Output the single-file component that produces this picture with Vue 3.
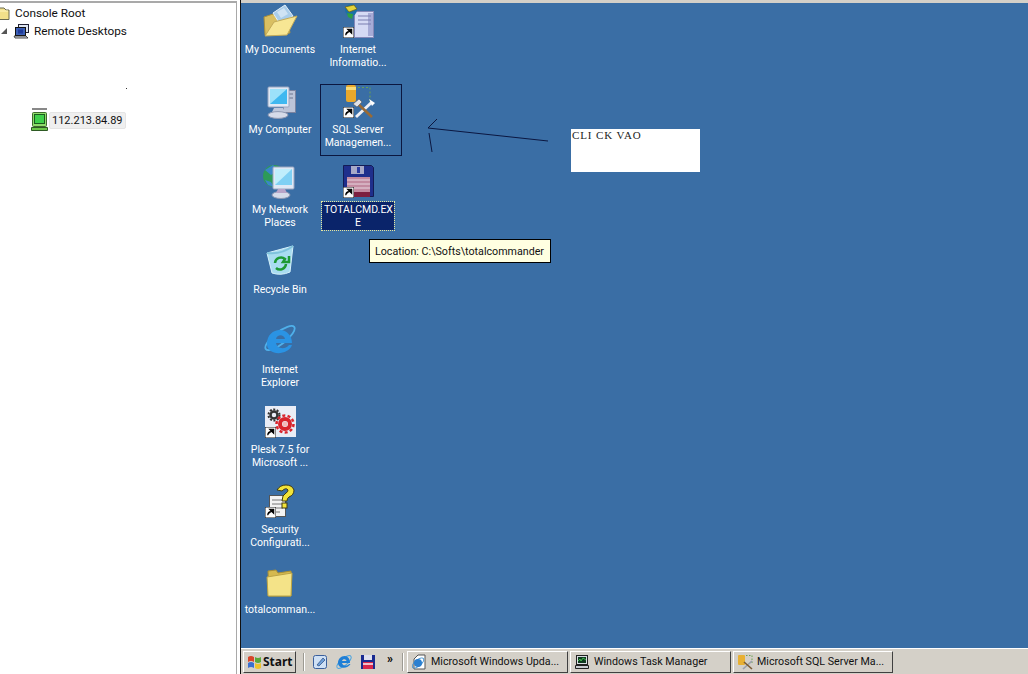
<script setup>
const icons = [
  { name: 'docs', label: ['My Documents'] },
  { name: 'iis', label: ['Internet', 'Informatio...'], shortcut: true },
  { name: 'computer', label: ['My Computer'] },
  { name: 'sql', label: ['SQL Server', 'Managemen...'], shortcut: true, boxed: true },
  { name: 'network', label: ['My Network', 'Places'] },
  { name: 'floppy', label: ['TOTALCMD.EX', 'E'], shortcut: true, selected: true },
  { name: 'bin', label: ['Recycle Bin'] },
  null,
  { name: 'ie', label: ['Internet', 'Explorer'] },
  null,
  { name: 'plesk', label: ['Plesk 7.5 for', 'Microsoft ...'], shortcut: true },
  null,
  { name: 'security', label: ['Security', 'Configurati...'], shortcut: true },
  null,
  { name: 'folder', label: ['totalcomman...'] },
  null
]

const tasks = [
  { name: 'ie', text: 'Microsoft Windows Upda...', width: 161 },
  { name: 'taskmgr', text: 'Windows Task Manager', width: 161 },
  { name: 'sql', text: 'Microsoft SQL Server Ma...', width: 160 }
]
</script>

<template>
  <div class="screen">
    <aside class="console">
      <div class="tree-row root-row">
        <svg class="tree-icon root-folder" width="16" height="14" viewBox="0 0 16 14">
          <path d="M-6 2h14l2 2h3v9.500H-6z" fill="#f2e08a" stroke="#6a6a50" />
          <path d="M-6 5H12" stroke="#fff6c0" />
        </svg>
        <span>Console Root</span>
      </div>
      <div class="tree-row desk-row">
        <span class="arrow"></span>
        <svg class="tree-icon" width="17" height="16" viewBox="0 0 17 16">
          <rect x="5.500" y="1.500" width="10" height="8" fill="#dfe6f2" stroke="#223" />
          <rect x="2.500" y="4.500" width="10" height="8" fill="#3b5fb5" stroke="#111" />
          <path d="M5 6.500h5v4H5z" fill="#1f3a9a" />
          <path d="M1 13h12l2 2H2z" fill="#d8dbe0" stroke="#222" stroke-width=".8" />
        </svg>
        <span>Remote Desktops</span>
      </div>
      <span class="speck"></span>
      <div class="server">
        <svg width="18" height="24" viewBox="0 0 18 24">
          <path d="M1 1h15" stroke="#555" stroke-width="1.400" />
          <rect x="1.500" y="4.500" width="14" height="14" rx="1" fill="#8fdc6a" stroke="#3d6a2c" />
          <rect x="3.500" y="6.500" width="10" height="9" fill="#3fd04a" stroke="#1c5a1e" />
          <path d="M.5 19.500h16v3H.5z" fill="#6cc84a" stroke="#2e5a24" />
        </svg>
        <span class="server-name">112.213.84.89</span>
      </div>
    </aside>

    <main class="remote">
      <section class="desktop">
        <div class="icon-grid">
          <template v-for="(item, i) in icons" :key="i">
            <div v-if="item" class="desk-icon">
              <div class="glyph">
                <svg width="36" height="36" viewBox="0 0 36 36">
                  <g v-if="item.name === 'docs'">
                    <path d="M3 31 2 13l9-3 2 2 12-3 3 20z" fill="#d9bf62" stroke="#a98f3c" />
                    <path d="M11 9 23 1l8 11-13 8z" fill="#a9cdea" stroke="#e4f0fa" />
                    <path d="M15 8l7-4 4 6-7 4z" fill="#cfe3f4" />
                    <path d="M3 32 12 18l23-6-10 19z" fill="#f7e694" stroke="#c4ab58" />
                  </g>
                  <g v-else-if="item.name === 'iis'">
                    <rect x="14.500" y="7.500" width="19" height="26" fill="#d5daf4" stroke="#8488b8" />
                    <path d="M28 9h5v23h-5z" fill="#a6abd6" />
                    <path d="M18 12h13M18 16h13M18 20h13" stroke="#7a7fb0" />
                    <circle cx="11" cy="6" r="6" fill="#1c6fa8" />
                    <path d="M5 3l9-2 3 4-8 3z" fill="#e4d33a" stroke="#6b5d12" stroke-width=".7" />
                    <path d="M7 9l6 1-1 5-4-2z" fill="#2ea043" />
                  </g>
                  <g v-else-if="item.name === 'computer'">
                    <rect x="21.500" y="6.500" width="12" height="22" fill="#bcc4d8" stroke="#7a83a0" />
                    <path d="M24 10h7M24 14h7" stroke="#6d7690" />
                    <rect x="6" y="3" width="21" height="20" rx="1" fill="#dfe8f5" stroke="#9aa6c0" />
                    <rect x="8" y="5" width="17" height="15" fill="#3fb8f0" />
                    <path d="M8 5h17L8 20z" fill="#b4ebfc" opacity=".8" />
                    <path d="M12 24h9l2 4H10z" fill="#bfc8dc" />
                    <ellipse cx="16" cy="31" rx="10" ry="3.400" fill="#d6dbe9" stroke="#8f99b3" />
                  </g>
                  <g v-else-if="item.name === 'network'">
                    <circle cx="12" cy="12" r="11" fill="#2d9a58" />
                    <path d="M3 6l8-5 5 5-7 5zM3 16l6 2 3 5-6-2z" fill="#3a86c8" />
                    <rect x="11" y="3" width="21" height="22" rx="1" fill="#dfe8f5" stroke="#9aa6c0" />
                    <rect x="13" y="5" width="17" height="16" fill="#7fd0f4" />
                    <path d="M13 5h17L13 21z" fill="#c0eefc" />
                    <ellipse cx="19" cy="31" rx="9" ry="3.500" fill="#d6dbe9" stroke="#8f99b3" />
                    <path d="M16 25h7l2 4H14z" fill="#b8a4c8" />
                  </g>
                  <g v-else-if="item.name === 'sql'">
                    <rect x="6" y="1" width="10" height="17" rx="2" fill="#e8a82c" />
                    <path d="M6 3h10v3H6z" fill="#f7dc7a" />
                    <path d="M18 3.500h12v15" fill="none" stroke="#6aa052" stroke-dasharray="2 2" />
                    <path d="M16 33 32 18" stroke="#f0f0f5" stroke-width="3" />
                    <path d="M17 19l15 14" stroke="#9a6a34" stroke-width="2.500" />
                    <path d="M13 20l6-5 3 3-5 5z" fill="#dfe2e8" stroke="#555" stroke-width=".6" />
                    <path d="M29 15l6 4-3 3z" fill="#fff" />
                  </g>
                  <g v-else-if="item.name === 'floppy'">
                    <path d="M3.500 1.500h28l2 2v29h-30z" fill="#1f2f8c" stroke="#131c55" />
                    <rect x="11" y="2" width="13" height="8" fill="#a7a9c8" />
                    <rect x="17" y="3" width="3" height="6" fill="#2a3aa0" />
                    <rect x="7" y="13" width="23" height="20" fill="#c28aa0" />
                    <path d="M7 16h23M7 20h23M7 24h23" stroke="#e7d5df" />
                    <rect x="7" y="28" width="23" height="5" fill="#7c1f3f" />
                  </g>
                  <g v-else-if="item.name === 'bin'">
                    <path d="M5 9 31 2l-3 26q-9 4-18 1z" fill="#a8dcf0" stroke="#d5f1fb" />
                    <path d="M5 9q14 2 26-7" fill="none" stroke="#7ec2dc" stroke-width="2" />
                    <path d="M13 19a6 6 0 0 1 10-4l-2 3h6v-6" fill="none" stroke="#1d9a34" stroke-width="2.500" />
                    <path d="M24 20a6 6 0 0 1-10 4" fill="none" stroke="#1d9a34" stroke-width="2.500" />
                  </g>
                  <g v-else-if="item.name === 'ie'">
                    <ellipse cx="18" cy="14" rx="18" ry="6" transform="rotate(-38 18 14)" fill="none" stroke="#4fb0ea" stroke-width="1.800" />
                    <path d="M5 20C5 11 11 6 18 6s12 6 12 13H14c1 6 9 7 13 2h3c-4 11-25 11-25-1zM14 15h9c-1-5-8-5-9 0z" fill="#2a93e4" fill-rule="evenodd" />
                  </g>
                  <g v-else-if="item.name === 'plesk'">
                    <rect x="3" y="2" width="31" height="31" fill="#e9edf6" />
                    <circle cx="12" cy="11" r="5.500" fill="none" stroke="#333" stroke-width="2" stroke-dasharray="2 1.500" />
                    <circle cx="12" cy="11" r="3.500" fill="none" stroke="#333" stroke-width="2.500" />
                    <circle cx="23" cy="20" r="8.500" fill="none" stroke="#d9242c" stroke-width="2.500" stroke-dasharray="3 2.300" />
                    <circle cx="23" cy="20" r="5" fill="none" stroke="#d9242c" stroke-width="4" />
                    <circle cx="23" cy="20" r="2.500" fill="#f4b8b8" />
                  </g>
                  <g v-else-if="item.name === 'security'">
                    <rect x="7.500" y="11.500" width="16" height="21" fill="#f3f3f3" stroke="#555" />
                    <path d="M10 16h11M10 20h11M10 24h11M10 28h8" stroke="#777" />
                    <path d="M15 6q3-5 9-5t8 5q0 5-5 7-2 1-2 4h-5q0-6 4-8 2-1 2-3-2-3-6 1z" fill="#f2e43a" stroke="#403a10" />
                    <rect x="20" y="19" width="5" height="5" fill="#f2e43a" stroke="#403a10" />
                  </g>
                  <g v-else-if="item.name === 'folder'">
                    <path d="M6 7l8-1 2 3 13-2v25H7z" fill="#d5b94e" stroke="#a88f35" />
                    <path d="M6 32 5 13l25-4-1 23z" fill="#f4e388" stroke="#bca444" />
                  </g>
                </svg>
                <svg v-if="item.shortcut" class="shortcut" width="11" height="11" viewBox="0 0 12 12">
                  <rect width="12" height="12" fill="#fff" stroke="#000" />
                  <path d="M3 9c0-3 1-4 4-4M5 2.500h4.500V7z" fill="#000" stroke="#000" stroke-width="1.200" />
                </svg>
              </div>
              <div class="label" :class="{ selected: item.selected }">
                <div v-for="line in item.label" :key="line">{{ line }}</div>
              </div>
              <span v-if="item.boxed" class="focus-box"></span>
            </div>
            <div v-else class="empty-cell"></div>
          </template>
        </div>

        <svg class="scribble" width="130" height="50" viewBox="0 0 130 50">
          <path d="M8 23 128 36M8 23 17 14M9 28 12 47" fill="none" stroke="#0b1740" stroke-width="1" />
        </svg>
        <div class="note">CLI CK VAO</div>
        <div class="tooltip">Location: C:\Softs\totalcommander</div>
      </section>

      <footer class="taskbar">
        <button class="start">
          <svg width="15" height="14" viewBox="0 0 15 14">
            <path d="M1 2q3-2 6 0v5q-3-2-6 0z" fill="#d8452a" />
            <path d="M8 2q3 2 6 0v5q-3 2-6 0z" fill="#5aa83a" />
            <path d="M1 8q3-2 6 0v5q-3-2-6 0z" fill="#3a6fd0" />
            <path d="M8 8q3 2 6 0v5q-3 2-6 0z" fill="#eec22e" />
          </svg>
          Start
        </button>
        <span class="grip first-grip"></span>
        <div class="quick">
          <svg width="18" height="18" viewBox="0 0 18 18">
            <rect x="2.500" y="2.500" width="13" height="13" rx="2" fill="#cfe0f4" stroke="#3a5f9c" />
            <path d="M6 12 12 5l2 2-6 6z" fill="#6f9fd8" stroke="#28497e" stroke-width=".7" />
          </svg>
          <svg width="18" height="18" viewBox="0 0 18 18">
            <ellipse cx="9" cy="9" rx="9" ry="3.500" transform="rotate(-40 9 9)" fill="none" stroke="#46a2e0" />
            <path d="M3 10c0-4 3-7 6.500-7S15 6 15 10H7c.5 3 5 3.500 7 1h1.500C13 16 3 16 3 10zM7 8h4.500C11 5.500 7.500 5.500 7 8z" fill="#1f7fd6" fill-rule="evenodd" />
          </svg>
          <svg width="18" height="18" viewBox="0 0 18 18">
            <path d="M2 2h14v14H2z" fill="#1a2a90" />
            <rect x="5" y="2" width="8" height="5" fill="#dfe0ee" />
            <rect x="4" y="9" width="10" height="7" fill="#d8284c" />
            <path d="M4 11h10" stroke="#fff" stroke-width="1.400" />
          </svg>
          <span class="more">»</span>
        </div>
        <span class="grip last-grip"></span>
        <button v-for="task in tasks" :key="task.text" class="task" :style="{ width: task.width + 'px' }">
          <svg width="16" height="16" viewBox="0 0 16 16">
            <g v-if="task.name === 'ie'">
              <path d="M7 1h7v14H3V5z" fill="#fff" stroke="#555" />
              <ellipse cx="7" cy="9" rx="7" ry="3" transform="rotate(-40 7 9)" fill="none" stroke="#3b8fd0" />
              <circle cx="7" cy="9" r="4" fill="#2a7fd0" />
            </g>
            <g v-else-if="task.name === 'taskmgr'">
              <rect x="2.500" y="1.500" width="11" height="9" fill="#d9dde2" stroke="#222" />
              <rect x="4" y="3" width="8" height="6" fill="#0f3a20" />
              <path d="M4 7l2-2 1 2 2-3 3 2" fill="none" stroke="#4fe05a" stroke-width=".8" />
              <path d="M1.500 11.500h13v3h-13z" fill="#c7cbd0" stroke="#222" />
            </g>
            <g v-else>
              <rect x="1" y="1" width="7" height="10" rx="1" fill="#e8b033" />
              <path d="M9 1.500h6v8" fill="none" stroke="#6aa052" stroke-dasharray="1.500 1.500" />
              <path d="M6 15 15 7" stroke="#9aa0ac" stroke-width="1.600" />
              <path d="M7 8l8 7" stroke="#7a5a34" stroke-width="1.600" />
            </g>
          </svg>
          <span>{{ task.text }}</span>
        </button>
      </footer>
    </main>
  </div>
</template>

<style>
html, body {
  margin: 0;
  background: #fff;
}
</style>

<style scoped>
.screen {
  width: 1028px;
  height: 674px;
  display: flex;
  overflow: hidden;
  font-family: Roboto, "Noto Sans", sans-serif;
  font-size: 10.5px;
  background: #fff;
}

/* left tree */
.console {
  position: relative;
  width: 237px;
  flex: none;
  box-sizing: border-box;
  margin-top: 1px;
  border-top: 2px solid #a9a9a9;
  border-right: 1px solid #a9a9a9;
  color: #111;
  font-size: 11.8px;
}

.tree-row {
  height: 18px;
  display: flex;
  align-items: center;
  gap: 3px;
}

.root-row {
  margin-top: 1px;
}

.desk-row {
  padding-left: 1px;
}

.arrow {
  width: 0;
  height: 0;
  margin-right: 3px;
  border-left: 6px solid transparent;
  border-bottom: 6px solid #555;
}

.tree-icon {
  flex: none;
}

.root-folder {
  overflow: hidden;
  margin-left: -4px;
}

.desk-row .tree-icon {
  margin-right: 1px;
}

.speck {
  position: absolute;
  left: 126px;
  top: 85px;
  width: 1px;
  height: 1px;
  background: #333;
}

.server {
  position: absolute;
  left: 31px;
  top: 105px;
  display: flex;
  align-items: center;
  gap: 0;
}

.server-name {
  padding: 1px 2px;
  margin-top: 1px;
  font-size: 11px;
  background: #efefef;
  border-radius: 2px;
  border: 1px solid #e4e4e4;
}

/* remote session */
.remote {
  flex: 1;
  display: flex;
  flex-direction: column;
  border-left: 1px solid #111;
  margin-left: 3px;
}

.desktop {
  position: relative;
  flex: 1;
  background: #3a6ea5;
  border-top: 3px solid #d4d0c8;
}

.icon-grid {
  display: grid;
  grid-template-columns: 78px 78px;
  grid-auto-rows: 80px;
}

.desk-icon {
  position: relative;
  display: flex;
  flex-direction: column;
  align-items: center;
  color: #fff;
  line-height: 13px;
  text-align: center;
  white-space: nowrap;
}

.glyph {
  position: relative;
  width: 36px;
  height: 36px;
  margin-top: 1px;
  margin-bottom: 2px;
}

.shortcut {
  position: absolute;
  left: 3px;
  bottom: 2px;
}

.label {
  padding: 1px 2px;
}

.label.selected {
  width: 72px;
  box-sizing: border-box;
  background: #0a246a;
  outline: 1px dotted #e6e6a0;
}

.focus-box {
  position: absolute;
  left: 1px;
  top: 1px;
  width: 80px;
  height: 70px;
  border: 1px solid #0b1740;
}

.scribble {
  position: absolute;
  left: 179px;
  top: 102px;
}

.note {
  position: absolute;
  left: 330px;
  top: 126px;
  width: 129px;
  height: 43px;
  background: #fff;
  color: #222;
  padding-left: 1px;
  box-sizing: border-box;
  letter-spacing: .9px;
  font: 11px/12px "Liberation Serif", serif;
}

.tooltip {
  position: absolute;
  left: 128px;
  top: 236px;
  width: 182px;
  height: 24px;
  box-sizing: border-box;
  padding-left: 5px;
  font-size: 10.7px;
  line-height: 24px;
  white-space: nowrap;
  background: #ffffe1;
  border: 1px solid #000;
  color: #111;
}

/* taskbar */
.taskbar {
  height: 26px;
  display: flex;
  align-items: center;
  gap: 2px;
  padding-left: 2px;
  background: #d4d0c8;
  border-top: 1px solid #fff;
  box-sizing: border-box;
}

button {
  height: 22px;
  display: flex;
  align-items: center;
  gap: 4px;
  padding: 0 3px;
  font: inherit;
  font-size: 10.7px;
  color: #111;
  background: #d4d0c8;
  border: 1px solid;
  border-color: #fff #404040 #404040 #fff;
  box-sizing: border-box;
}

button svg {
  flex: none;
}

.start {
  width: 53px;
  gap: 1px;
  font-family: "Noto Sans", sans-serif;
  font-size: 12px;
  font-weight: 700;
  flex: none;
}

.grip {
  width: 1px;
  height: 18px;
  background: #9c9a92;
  border-right: 1px solid #fff;
}

.first-grip {
  margin: 0 4px 0 5px;
}

.last-grip {
  margin: 0 1px 0 5px;
}

.quick {
  display: flex;
  align-items: center;
  gap: 6px;
}

.more {
  font-size: 12px;
  font-weight: 700;
  margin: -6px 2px 0 4px;
}

.task {
  flex: none;
  white-space: nowrap;
}
</style>
